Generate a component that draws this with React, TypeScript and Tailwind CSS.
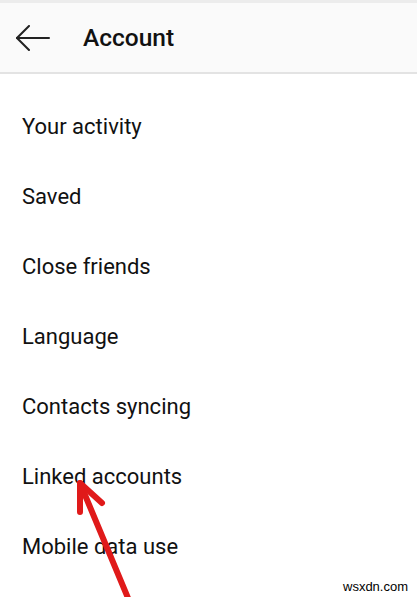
const items = [
  'Your activity',
  'Saved',
  'Close friends',
  'Language',
  'Contacts syncing',
  'Linked accounts',
  'Mobile data use',
];

export default function App() {
  return (
    <div className="relative h-[597px] w-[417px] overflow-hidden bg-white font-['Roboto',sans-serif] text-[#111]">
      <div className="h-[3px] bg-[#ececec]" />
      <header className="flex h-[71px] items-center border-b-2 border-[#e3e3e3] bg-[#fafafa]">
        <svg width="34" height="26" viewBox="0 0 34 26" className="ml-[16px]" fill="none" stroke="#222" strokeWidth="2" strokeLinecap="round">
          <path d="M1 13H33" />
          <path d="M13 1L1 13L13 25" />
        </svg>
        <h1 className="ml-[33px] mt-[2px] text-[24.5px] font-medium leading-none">Account</h1>
      </header>
      <ul className="pt-[17px]">
        {items.map((label) => (
          <li key={label} className="flex h-[70px] items-center pl-[22px] text-[22px]">
            {label}
          </li>
        ))}
      </ul>
      <svg className="absolute left-0 top-0" width="417" height="597" viewBox="0 0 417 597" fill="none" stroke="#e01a1a" strokeWidth="6" strokeLinecap="round" strokeLinejoin="round">
        <path d="M80 483L133 610" />
        <path d="M80 512L80 483L102 503" />
      </svg>
      <span className="absolute left-[343px] top-[577px] font-['Liberation_Sans',sans-serif] text-[13px] text-black">wsxdn.com</span>
    </div>
  );
}
